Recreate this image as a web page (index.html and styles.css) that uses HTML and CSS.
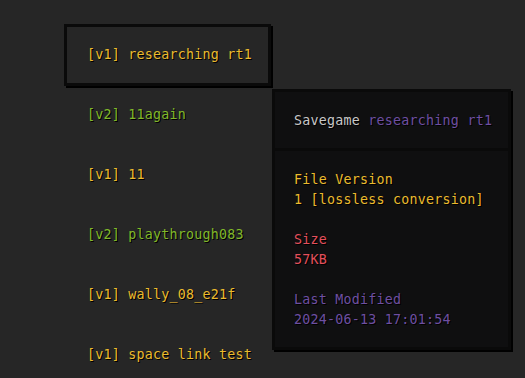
FILE: index.html
```html
<!DOCTYPE html>
<html lang="en">
<head>
    <meta charset="UTF-8">
    <meta name="viewport" content="width=device-width, initial-scale=1.0">
    <title>Savegames</title>
    <link rel="stylesheet" href="styles.css">
</head>
<body>
    <div class="save-list">
        <div class="save-item v1 selected">[v1] researching rt1</div>
        <div class="save-item v2">[v2] 11again</div>
        <div class="save-item v1">[v1] 11</div>
        <div class="save-item v2">[v2] playthrough083</div>
        <div class="save-item v1">[v1] wally_08_e21f</div>
        <div class="save-item v1">[v1] space link test</div>
    </div>

    <div class="tooltip">
        <div class="tooltip-head">
            <span class="label">Savegame</span> <span class="name">researching rt1</span>
        </div>
        <div class="tooltip-body">
            <div class="field version">
                <div>File Version</div>
                <div>1 [lossless conversion]</div>
            </div>
            <div class="field size">
                <div>Size</div>
                <div>57KB</div>
            </div>
            <div class="field modified">
                <div>Last Modified</div>
                <div>2024-06-13 17:01:54</div>
            </div>
        </div>
    </div>
</body>
</html>
```

FILE: styles.css
```css
:root {
    --bg: #262626;
    --panel: #0f0f10;
    --edge: #0a0a0a;
    --yellow: #ebbb2e;
    --green: #80b82a;
    --red: #e3505c;
    --purple: #6e4fa2;
    --grey: #c8c8c8;
}

* {
    margin: 0;
    padding: 0;
    box-sizing: border-box;
    font-family: 'DejaVu Sans Mono', 'Liberation Mono', monospace;
}

body {
    background-color: var(--bg);
    width: 525px;
    height: 378px;
    overflow: hidden;
    position: relative;
    font-size: 13.3px;
    line-height: 20px;
    letter-spacing: 0.25px;
    text-shadow: 1px 1px 0 #000;
}

.save-list {
    display: flex;
    flex-direction: column;
    width: 207px;
    margin: 25px 0 0 64px;
}

.save-item {
    height: 60px;
    display: flex;
    align-items: center;
    padding: 0 20px;
    border: 3px solid transparent;
    white-space: nowrap;
}

.save-item.v1 {
    color: var(--yellow);
}

.save-item.v2 {
    color: var(--green);
}

.save-item.selected {
    height: 62px;
    margin-top: -1px;
    margin-bottom: -1px;
    border-color: var(--edge);
    box-shadow: 2px 2px 0 #000;
}

.tooltip {
    position: absolute;
    left: 272px;
    top: 89px;
    width: 239px;
    background-color: var(--panel);
    border: 3px solid var(--edge);
    box-shadow: 2px 2px 0 #000;
}

.tooltip-head {
    padding: 19px 19px 17px;
    border-bottom: 3px solid var(--edge);
    white-space: nowrap;
}

.tooltip-head .label {
    color: var(--grey);
}

.tooltip-head .name {
    color: var(--purple);
}

.tooltip-body {
    display: flex;
    flex-direction: column;
    gap: 20px;
    padding: 19px 19px 17px;
}

.field.version {
    color: var(--yellow);
}

.field.size {
    color: var(--red);
}

.field.modified {
    color: var(--purple);
}
```
